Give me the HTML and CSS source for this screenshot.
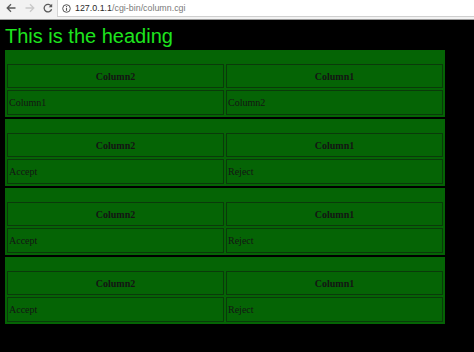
FILE: index.html
```html
<!DOCTYPE html>
<html>
<head>
<meta charset="utf-8">
<title>column.cgi</title>
<link rel="stylesheet" href="styles.css">
</head>
<body>
<div class="toolbar">
  <div class="nav">
    <svg class="ico back" width="10" height="10" viewBox="0 0 10 10"><path d="M9.5 5H1.2M5 1.2L1.2 5L5 8.8" fill="none" stroke="#5a5a5a" stroke-width="1.3"/></svg>
    <svg class="ico fwd" width="10" height="10" viewBox="0 0 10 10"><path d="M0.5 5H8.8M5 1.2L8.8 5L5 8.8" fill="none" stroke="#c9c9c9" stroke-width="1.3"/></svg>
    <svg class="ico reload" width="10" height="10" viewBox="0 0 10 10"><path d="M8.3 3.3A3.8 3.8 0 1 0 8.6 6.2" fill="none" stroke="#5a5a5a" stroke-width="1.3"/><path d="M9.2 0.8V4.3H5.7Z" fill="#5a5a5a"/></svg>
  </div>
  <div class="address">
    <svg class="info" width="9" height="9" viewBox="0 0 9 9"><circle cx="4.5" cy="4.5" r="3.8" fill="none" stroke="#555" stroke-width="1"/><path d="M4.5 3.8V6.8" stroke="#555" stroke-width="1.1"/><path d="M4.5 2.1V3" stroke="#555" stroke-width="1.1"/></svg>
    <span class="host">127.0.1.1</span><span class="path">/cgi-bin/column.cgi</span>
  </div>
</div>
<div class="page">
  <h1 class="heading">This is the heading</h1>

  <div class="block">
    <table class="grid">
      <tr><th>Column2</th><th>Column1</th></tr>
      <tr><td>Column1</td><td>Column2</td></tr>
    </table>
  </div>

  <div class="block">
    <table class="grid">
      <tr><th>Column2</th><th>Column1</th></tr>
      <tr><td>Accept</td><td>Reject</td></tr>
    </table>
  </div>

  <div class="block">
    <table class="grid">
      <tr><th>Column2</th><th>Column1</th></tr>
      <tr><td>Accept</td><td>Reject</td></tr>
    </table>
  </div>

  <div class="block">
    <table class="grid">
      <tr><th>Column2</th><th>Column1</th></tr>
      <tr><td>Accept</td><td>Reject</td></tr>
    </table>
  </div>
</div>
</body>
</html>
```
FILE: styles.css
```css
html, body {
  margin: 0;
  padding: 0;
  background: #000;
  height: 100%;
}

.toolbar {
  display: flex;
  height: 19px;
  background: #f2f2f2;
  border-bottom: 1px solid #9c9c9c;
}

.nav {
  display: flex;
  align-items: flex-start;
  width: 57px;
  padding-top: 3px;
  box-sizing: border-box;
}

.ico { display: block; }
.back { margin-left: 6px; }
.fwd { margin-left: 9px; }
.reload { margin-left: 8px; }

.address {
  flex: 1;
  height: 16px;
  background: #fff;
  border-left: 1px solid #d4d4d4;
  border-bottom: 1px solid #cfcfcf;
  display: flex;
  align-items: center;
  padding-left: 4px;
  font-family: "Liberation Sans", Arial, sans-serif;
  font-size: 8.9px;
  white-space: nowrap;
}

.info { margin-right: 4px; }
.host { color: #2a2a2a; }
.path { color: #7a7a7a; }

.page {
  padding: 0 5px;
}

.heading {
  margin: 3px 0 0;
  font-family: "Liberation Sans", Arial, sans-serif;
  font-weight: normal;
  font-size: 20px;
  line-height: 27px;
  color: #1ee41e;
}

.block {
  width: 440px;
  background: #056405;
  padding-top: 12px;
  margin-bottom: 2px;
}

.grid {
  width: 100%;
  border-spacing: 2px;
  table-layout: fixed;
  font-family: "Liberation Serif", "Times New Roman", serif;
  font-size: 10px;
  color: #141414;
}

.grid th, .grid td {
  border: 1px solid #0a3a0a;
  padding: 0 1px;
}

.grid th {
  height: 22px;
  font-weight: bold;
  text-align: center;
}

.grid td {
  height: 23px;
  text-align: left;
}
```
